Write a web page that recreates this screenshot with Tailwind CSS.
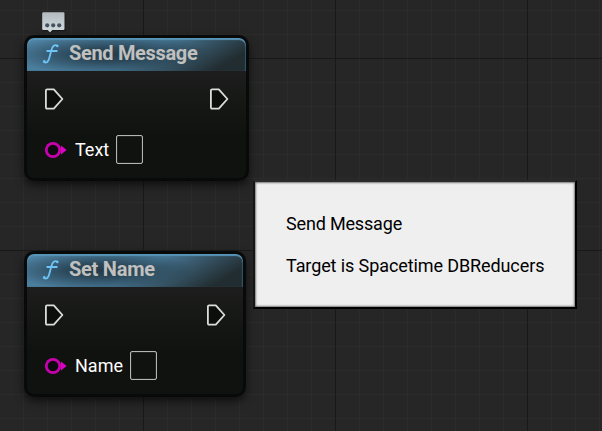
<!DOCTYPE html>
<html lang="en">
<head>
<meta charset="utf-8">
<title>Blueprint graph</title>
<script src="https://cdn.jsdelivr.net/npm/@tailwindcss/browser@4"></script>
</head>
<body class="overflow-hidden bg-[#262626] font-['Roboto','Liberation_Sans',sans-serif]">
<svg class="hidden">
  <symbol id="exec" viewBox="0 0 20 24"><path d="M1.9 3.5Q1.9 2.3 3.1 2.3H9.8L18.4 12L9.8 21.7H3.1Q1.9 21.7 1.9 20.5Z" fill="#0c0e0c" stroke="#dcddda" stroke-width="1.8" stroke-linejoin="round"/></symbol>
  <symbol id="pin" viewBox="0 0 22 18"><path d="M16 4.6L21.6 9L16 13.4Z" fill="#e000c4"/><circle cx="8" cy="9" r="6.7" fill="#0d0a0d" stroke="#c900ae" stroke-width="2.7"/></symbol>
  <symbol id="fn" viewBox="0 0 18 22"><path d="M2 19C4.5 20.5 6.3 18.9 7.2 15.3L9.6 6.5C10.5 3 12.6 1.5 15.4 2.5M5.2 8H14.8" fill="none" stroke="#6ec3f7" stroke-width="1.8" stroke-linecap="round"/><circle cx="2.3" cy="18.4" r="1.3" fill="#6ec3f7"/><circle cx="15.3" cy="3" r="1.3" fill="#6ec3f7"/></symbol>
</svg>
<main class="relative h-[431px] w-[602px] overflow-hidden">
  <svg class="absolute inset-0" width="602" height="431">
    <defs>
      <pattern id="minor" x="23" y="10" width="24" height="24" patternUnits="userSpaceOnUse"><path d="M0 .5H24M.5 0V24" stroke="#2b2b2b"/></pattern>
      <pattern id="major" x="143" y="58" width="192" height="192" patternUnits="userSpaceOnUse"><path d="M0 .5H192M.5 0V192" stroke="#191919"/></pattern>
    </defs>
    <rect width="602" height="431" fill="url(#minor)"/>
    <rect width="602" height="431" fill="url(#major)"/>
  </svg>

  <svg class="absolute left-[41px] top-[11px]" width="25" height="23" viewBox="0 0 25 23">
    <defs><linearGradient id="bub" x1="0" y1="0" x2="0" y2="1"><stop offset="0" stop-color="#b3bbc0"/><stop offset=".8" stop-color="#ccd5da"/></linearGradient></defs>
    <path d="M2 2.7H24.6V20.2H12L9.5 22.5L6.5 20.2H2Z" fill="#111" opacity=".55"/>
    <path d="M2.5 1.3H22.2Q23.5 1.3 23.5 2.6V17.7Q23.5 19 22.2 19H11.3L9 21.5L6.7 19H2.5Q1.2 19 1.2 17.7V2.6Q1.2 1.3 2.5 1.3Z" fill="url(#bub)"/>
    <g fill="#46525e"><circle cx="6.2" cy="14.3" r="2.1"/><circle cx="12.2" cy="14.3" r="2.1"/><circle cx="18.2" cy="14.3" r="2.1"/></g>
  </svg>

  <section class="absolute left-6 top-[35px] flex h-[146px] w-[225px] flex-col rounded-[10px] border-3 border-[#080909] bg-linear-to-b from-[#1c1d1c] from-25% to-[#10120f] to-70% shadow-[0_4px_9px_rgba(0,0,0,0.6)]">
    <header class="flex h-[33px] shrink-0 items-center overflow-hidden rounded-t-[7px] bg-[radial-gradient(ellipse_105px_19px_at_38%_50%,#243b49_0%,#243b49cc_35%,#243b4900_100%),linear-gradient(150deg,#4f84a5_0%,#467694_52%,#3a5c70_65%,#222d31_88%)] pl-[15px] shadow-[inset_0_2px_1px_#5794b8,inset_-1px_0_1px_#2f5265]">
      <svg class="-mt-px h-[22px] w-[18px]"><use href="#fn"/></svg>
      <h2 class="ml-[9px] -mt-[3px] text-[20px] leading-[32px] font-bold tracking-[-0.33px] whitespace-nowrap text-[#c0c0bf]">Send Message</h2>
    </header>
    <div class="mt-4 flex h-6 justify-between pl-[17px] pr-[17px]">
      <svg class="h-6 w-5"><use href="#exec"/></svg>
      <svg class="h-6 w-5"><use href="#exec"/></svg>
    </div>
    <div class="mt-[24px] flex h-[29px] items-center pl-[18px]">
      <svg class="h-[18px] w-[22px]"><use href="#pin"/></svg>
      <span class="ml-[8px] w-[35px] text-[18px] whitespace-nowrap text-white">Text</span>
      <span class="ml-[6px] h-[29px] w-[27px] rounded-[2px] border border-[#b5b6b4] bg-[#10120f] shadow-[inset_0_0_1px_#b5b6b4]"></span>
    </div>
  </section>

  <section class="absolute left-6 top-[251px] flex h-[146px] w-[222px] flex-col rounded-[10px] border-3 border-[#080909] bg-linear-to-b from-[#1c1d1c] from-25% to-[#10120f] to-70% shadow-[0_4px_9px_rgba(0,0,0,0.6)]">
    <header class="flex h-[33px] shrink-0 items-center overflow-hidden rounded-t-[7px] bg-[radial-gradient(ellipse_95px_19px_at_34%_50%,#243b49_0%,#243b49cc_35%,#243b4900_100%),linear-gradient(150deg,#4f84a5_0%,#467694_52%,#3a5c70_65%,#222d31_88%)] pl-[15px] shadow-[inset_0_2px_1px_#5794b8,inset_-1px_0_1px_#2f5265]">
      <svg class="-mt-px h-[22px] w-[18px]"><use href="#fn"/></svg>
      <h2 class="ml-[9px] -mt-[3px] text-[20px] leading-[32px] font-bold tracking-[-0.25px] whitespace-nowrap text-[#c0c0bf]">Set Name</h2>
    </header>
    <div class="mt-4 flex h-6 justify-between pl-[17px] pr-[17px]">
      <svg class="h-6 w-5"><use href="#exec"/></svg>
      <svg class="h-6 w-5"><use href="#exec"/></svg>
    </div>
    <div class="mt-[24px] flex h-[29px] items-center pl-[18px]">
      <svg class="h-[18px] w-[22px]"><use href="#pin"/></svg>
      <span class="ml-[8px] w-[49px] text-[18px] whitespace-nowrap text-white">Name</span>
      <span class="ml-[6px] h-[29px] w-[27px] rounded-[2px] border border-[#b5b6b4] bg-[#10120f] shadow-[inset_0_0_1px_#b5b6b4]"></span>
    </div>
  </section>

  <aside class="absolute left-[253px] top-[180px] flex h-[129px] w-[324px] flex-col gap-[18px] border-2 border-t-[#2c2c2c] border-l-[#151515] border-r-black border-b-black bg-[#efefef] pt-[30px] pl-[31px] text-[18px] leading-6 tracking-[-0.1px] whitespace-nowrap text-black shadow-[inset_0_0_2px_1px_#777]">
    <p class="tracking-[-0.17px]">Send Message</p>
    <p>Target is Spacetime DBReducers</p>
  </aside>
</main>
</body>
</html>
